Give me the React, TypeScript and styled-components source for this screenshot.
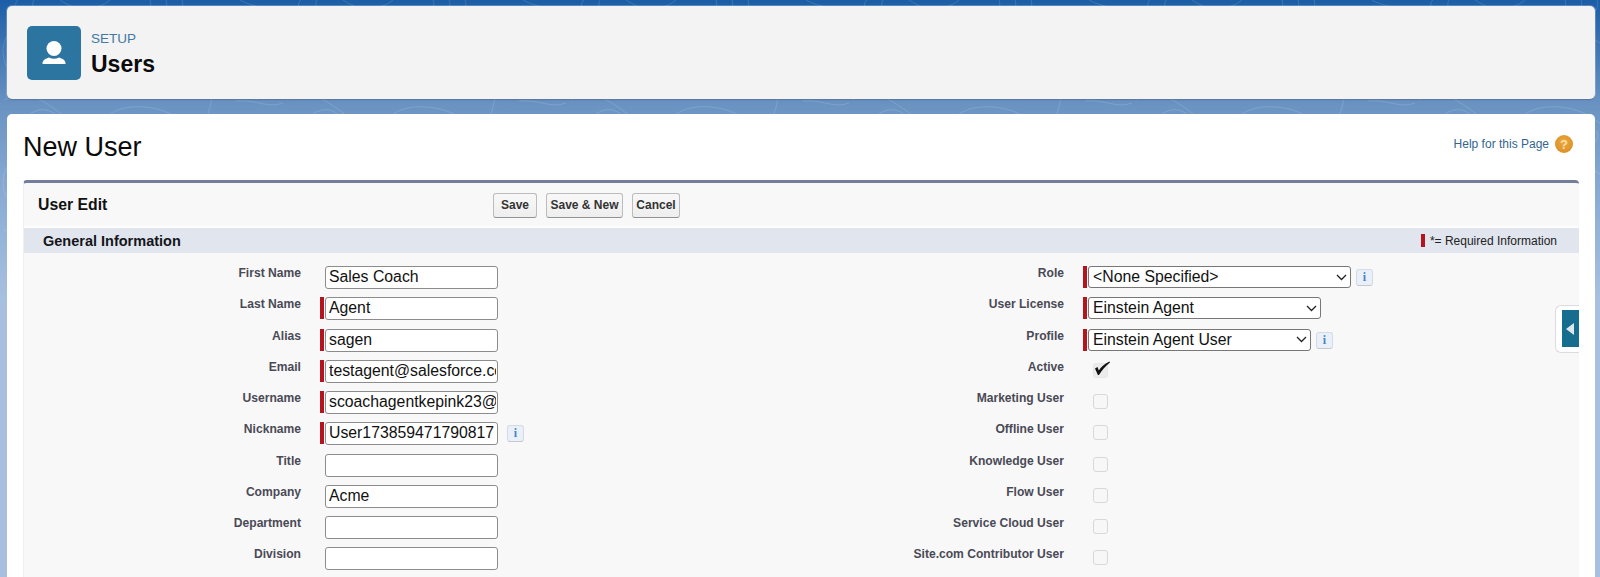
import React from "react"
import styled, { createGlobalStyle } from "styled-components"

const GlobalStyle = createGlobalStyle`
  html, body {
    margin: 0;
    padding: 0;
  }
  body {
    font-family: "Liberation Sans", Arial, sans-serif;
    color: #111;
  }
  * {
    box-sizing: border-box;
  }
`

const Page = styled.div`
  position: relative;
  height: 577px;
  overflow: hidden;
  padding: 6px 5px 0 7px;
  background: linear-gradient(#1b5da6 0, #6a93c2 105px, #8badd5 200px, #a7c0df 300px);
`

const Backdrop = styled.svg`
  position: absolute;
  top: 0;
  left: 0;
  width: 100%;
  height: 240px;
`

const HeaderCard = styled.header`
  position: relative;
  display: flex;
  align-items: center;
  gap: 10px;
  height: 93px;
  padding: 0 20px;
  background: #f3f3f3;
  border-radius: 5px;
  box-shadow: 0 1px 1px rgba(20, 50, 90, 0.45), 0 0 0 1px rgba(255, 255, 255, 0.25);
`

const IconTile = styled.div`
  width: 54px;
  height: 54px;
  border-radius: 5px;
  background: #2c75a1;
`

const Crumbs = styled.div`
  display: flex;
  flex-direction: column;
  gap: 3px;
  padding-top: 4px;
`

const Eyebrow = styled.div`
  font-size: 13.5px;
  line-height: 16px;
  color: #4278a2;
`

const HeaderTitle = styled.h1`
  margin: 0;
  font-size: 23px;
  line-height: 28px;
  font-weight: 700;
  color: #0b0b0d;
`

const ContentCard = styled.main`
  position: relative;
  margin-top: 15px;
  height: 480px;
  padding: 0 16px;
  background: #fff;
  border-radius: 5px 5px 0 0;
`

const TitleRow = styled.div`
  display: flex;
  align-items: center;
  justify-content: space-between;
  height: 66px;
  padding-right: 6px;
`

const PageTitle = styled.h2`
  margin: 0;
  font-size: 27px;
  line-height: 32px;
  font-weight: 400;
  color: #0a0a0a;
`

const HelpLink = styled.a`
  display: flex;
  align-items: center;
  gap: 6px;
  margin-top: -6px;
  font-size: 12px;
  color: #33668f;
`

const HelpIcon = styled.span`
  display: flex;
  align-items: center;
  justify-content: center;
  width: 18px;
  height: 18px;
  border-radius: 50%;
  font-size: 13px;
  font-weight: 700;
  color: #f8dfb0;
  background: radial-gradient(circle at 50% 40%, #eda93f, #d68a20);
`

const FormPanel = styled.section`
  position: relative;
  height: 400px;
  background: #f8f8f8;
  border-top: 3px solid #747d9a;
  border-left: 1px solid #eeeeee;
  border-radius: 4px 4px 0 0;
`

const Toolbar = styled.div`
  display: flex;
  align-items: center;
  height: 42px;
  padding-left: 14px;
  padding-top: 2px;
`

const PanelTitle = styled.div`
  width: 455px;
  font-size: 15.8px;
  font-weight: 700;
  color: #111;
`

const ButtonRow = styled.div`
  display: flex;
  gap: 9px;
`

const Button = styled.button<{ $width: number }>`
  width: ${(p) => p.$width}px;
  height: 25px;
  padding: 0;
  font-family: "Liberation Sans", Arial, sans-serif;
  font-size: 12px;
  font-weight: 700;
  color: #333;
  background: linear-gradient(#f8f8f8, #eeeeee);
  border: 1px solid #bcbcbc;
  border-bottom-color: #929292;
  border-radius: 3px;
`

const SectionBar = styled.div`
  display: flex;
  align-items: center;
  justify-content: space-between;
  height: 25px;
  margin-top: 3px;
  padding: 0 22px 0 19px;
  background: #e0e5ee;
  box-shadow: 0 -2px 0 #fdfdfd;
`

const SectionTitle = styled.div`
  font-size: 14.5px;
  font-weight: 700;
  color: #15151a;
`

const Legend = styled.div`
  display: flex;
  align-items: center;
  gap: 5px;
  font-size: 12px;
  color: #222;
`

const LegendMark = styled.span`
  width: 4px;
  height: 13px;
  background: #b3141d;
`

const Columns = styled.div`
  display: grid;
  grid-template-columns: 763px 1fr;
  padding-top: 13px;
`

const Column = styled.div`
  display: flex;
  flex-direction: column;
`

const Row = styled.div`
  display: grid;
  grid-template-columns: 277px 19px 5px 1fr;
  height: 31.25px;
`

const Label = styled.label`
  padding-top: 1px;
  font-size: 12.1px;
  line-height: 13px;
  font-weight: 700;
  text-align: right;
  color: #4a4a56;
`

const RequiredMark = styled.span<{ $on?: boolean }>`
  grid-column: 3;
  width: 4px;
  height: 22px;
  background: ${(p) => (p.$on ? "#b3141d" : "transparent")};
`

const Control = styled.div`
  grid-column: 4;
  display: flex;
  align-items: flex-start;
  gap: 9px;
`

const TextInput = styled.input`
  width: 173px;
  height: 23px;
  padding: 0 1px 1px 3px;
  font-family: "Liberation Sans", Arial, sans-serif;
  font-size: 15.8px;
  color: #111;
  background: #fff;
  border: 1px solid #8c8c8c;
  border-radius: 3px;
  outline: 0;
`

const chevron = encodeURIComponent(
  '<svg xmlns="http://www.w3.org/2000/svg" width="11" height="7"><path d="M1 1l4.500 4.500L10 1" fill="none" stroke="#222" stroke-width="1.300"/></svg>'
)

const Select = styled.select<{ $width: number }>`
  appearance: none;
  width: ${(p) => p.$width}px;
  height: 22px;
  padding: 0 0 1px 4px;
  font-family: "Liberation Sans", Arial, sans-serif;
  font-size: 15.8px;
  color: #111;
  background: #fff url("data:image/svg+xml,${chevron}") no-repeat right 3px center;
  border: 1px solid #777;
  border-radius: 3px;
  outline: 0;
`

const InfoButton = styled.span<{ $gap: number }>`
  display: flex;
  align-items: center;
  justify-content: center;
  width: 17px;
  height: 17px;
  margin-top: 3px;
  margin-left: ${(p) => p.$gap}px;
  font-family: "Liberation Serif", serif;
  font-size: 12px;
  font-weight: 700;
  color: #4a84c4;
  background: #e9f0f9;
  border: 1px solid #d6dbe2;
  border-bottom-color: #c4c9d0;
  border-radius: 3px;
`

const CheckSlot = styled.span`
  position: relative;
  display: block;
  width: 15px;
  height: 15px;
  margin: 3px 0 0 5px;
`

const CheckBox = styled.input`
  appearance: none;
  display: block;
  width: 15px;
  height: 15px;
  margin: 0;
  background: #f7f7f7;
  border: 1px solid #d8d8d8;
  border-radius: 3px;
  &:checked {
    background: #ececec;
    border-color: #e6e6e6;
  }
`

const CheckMark = styled.svg`
  position: absolute;
  top: -2px;
  left: 0;
  width: 18px;
  height: 16px;
`

const SideTab = styled.div`
  position: absolute;
  top: 122px;
  right: 0;
  display: flex;
  width: 24px;
  height: 48px;
  padding: 4px 0 5px 6px;
  background: #fff;
  border: 1px solid #dcdcdc;
  border-right: 0;
  border-radius: 6px 0 0 6px;
`

const SideTabInner = styled.div`
  display: flex;
  align-items: center;
  justify-content: center;
  width: 100%;
  background: #176d8e;
`

const Arrow = styled.span`
  width: 0;
  height: 0;
  margin-right: 2px;
  border-top: 6px solid transparent;
  border-bottom: 6px solid transparent;
  border-right: 8px solid #dfe8ec;
`

type Field = { label: string; value?: string; required?: boolean; info?: boolean }

const leftFields: Field[] = [
  { label: "First Name", value: "Sales Coach" },
  { label: "Last Name", value: "Agent", required: true },
  { label: "Alias", value: "sagen", required: true },
  { label: "Email", value: "testagent@salesforce.com", required: true },
  { label: "Username", value: "scoachagentkepink23@salesforce.com", required: true },
  { label: "Nickname", value: "User173859471790817", required: true, info: true },
  { label: "Title" },
  { label: "Company", value: "Acme" },
  { label: "Department" },
  { label: "Division" },
]

const selectFields = [
  { label: "Role", value: "<None Specified>", width: 263, info: true },
  { label: "User License", value: "Einstein Agent", width: 233, info: false },
  { label: "Profile", value: "Einstein Agent User", width: 223, info: true },
]

const checkFields = [
  { label: "Active", checked: true },
  { label: "Marketing User" },
  { label: "Offline User" },
  { label: "Knowledge User" },
  { label: "Flow User" },
  { label: "Service Cloud User" },
  { label: "Site.com Contributor User" },
]

function PersonIcon() {
  return (
    <svg width="54" height="54" viewBox="0 0 54 54" style={{ display: "block" }}>
      <circle cx="27" cy="22.500" r="7.500" fill="#fff" />
      <path
        d="M16 38c-.5 0-.7-.4-.6-1 .5-3 3-4.600 6.600-5.600 1.600.9 3.300 1.400 5 1.400s3.400-.5 5-1.400c3.600 1 6.100 2.600 6.600 5.600.1.6-.1 1-.6 1z"
        fill="#fff"
      />
    </svg>
  )
}

function BackdropLines() {
  return (
    <Backdrop aria-hidden="true">
      <defs>
        <pattern id="contours" width="283" height="131" patternUnits="userSpaceOnUse">
          <g fill="none" stroke="#fff" strokeOpacity="0.13" strokeWidth="1">
            <path d="M18 0c-6 4 2 12-4 24s-16 20-8 42" />
            <path d="M34 0c-4 6 4 10-2 22" />
            <path d="M60 0c4 3 8 4 14 8" />
            <path d="M110 0c-6 5-12 7-20 8" />
            <path d="M150 0c2 5 0 9-4 14" />
            <path d="M166 0c2 5 0 9-4 14" />
            <path d="M182 0c2 5 0 9-4 14" />
            <path d="M240 0c6 4 14 5 22 8" />
            <path d="M4 100c14-8 30-4 40 2s22 14 32 28" />
            <path d="M30 114c12-8 26-6 36 16" />
            <path d="M96 131c8-16 22-26 48-24s38 14 50 24" />
            <path d="M120 131c6-10 14-14 26-13s18 6 24 13" />
            <path d="M212 98c-2 12-6 22-10 33" />
            <path d="M236 101c20-2 32 8 47 2" />
            <path d="M228 131c10-10 30-14 55-10" />
            <path d="M6 50c30-14 56 6 84-4" />
            <path d="M180 40c18 10 34 30 70 24" />
          </g>
        </pattern>
      </defs>
      <rect width="100%" height="100%" fill="url(#contours)" />
    </Backdrop>
  )
}

export default function App() {
  return (
    <Page>
      <GlobalStyle />
      <BackdropLines />
      <HeaderCard>
        <IconTile>
          <PersonIcon />
        </IconTile>
        <Crumbs>
          <Eyebrow>SETUP</Eyebrow>
          <HeaderTitle>Users</HeaderTitle>
        </Crumbs>
      </HeaderCard>
      <ContentCard>
        <TitleRow>
          <PageTitle>New User</PageTitle>
          <HelpLink>
            Help for this Page
            <HelpIcon>?</HelpIcon>
          </HelpLink>
        </TitleRow>
        <FormPanel>
          <Toolbar>
            <PanelTitle>User Edit</PanelTitle>
            <ButtonRow>
              <Button $width={44}>Save</Button>
              <Button $width={77}>Save &amp; New</Button>
              <Button $width={48}>Cancel</Button>
            </ButtonRow>
          </Toolbar>
          <SectionBar>
            <SectionTitle>General Information</SectionTitle>
            <Legend>
              <LegendMark />
              *= Required Information
            </Legend>
          </SectionBar>
          <Columns>
            <Column>
              {leftFields.map((f) => (
                <Row key={f.label}>
                  <Label>{f.label}</Label>
                  <RequiredMark $on={f.required} />
                  <Control>
                    <TextInput type="text" readOnly value={f.value ?? ""} />
                    {f.info && <InfoButton $gap={0}>i</InfoButton>}
                  </Control>
                </Row>
              ))}
            </Column>
            <Column>
              {selectFields.map((f) => (
                <Row key={f.label}>
                  <Label>{f.label}</Label>
                  <RequiredMark $on />
                  <Control>
                    <Select $width={f.width} value={f.value} onChange={() => {}}>
                      <option>{f.value}</option>
                    </Select>
                    {f.info && <InfoButton $gap={-4}>i</InfoButton>}
                  </Control>
                </Row>
              ))}
              {checkFields.map((f) => (
                <Row key={f.label}>
                  <Label>{f.label}</Label>
                  <RequiredMark />
                  <Control>
                    <CheckSlot>
                      <CheckBox type="checkbox" readOnly checked={!!f.checked} />
                      {f.checked && (
                        <CheckMark viewBox="0 0 18 16">
                          <path d="M2 7.500L4.500 6l1.300 3.500C8 6 11 3 16.500.5l.5 1C12.500 5 9 9 6 14H4.900z" fill="#111" />
                        </CheckMark>
                      )}
                    </CheckSlot>
                  </Control>
                </Row>
              ))}
            </Column>
          </Columns>
          <SideTab>
            <SideTabInner>
              <Arrow />
            </SideTabInner>
          </SideTab>
        </FormPanel>
      </ContentCard>
    </Page>
  )
}
